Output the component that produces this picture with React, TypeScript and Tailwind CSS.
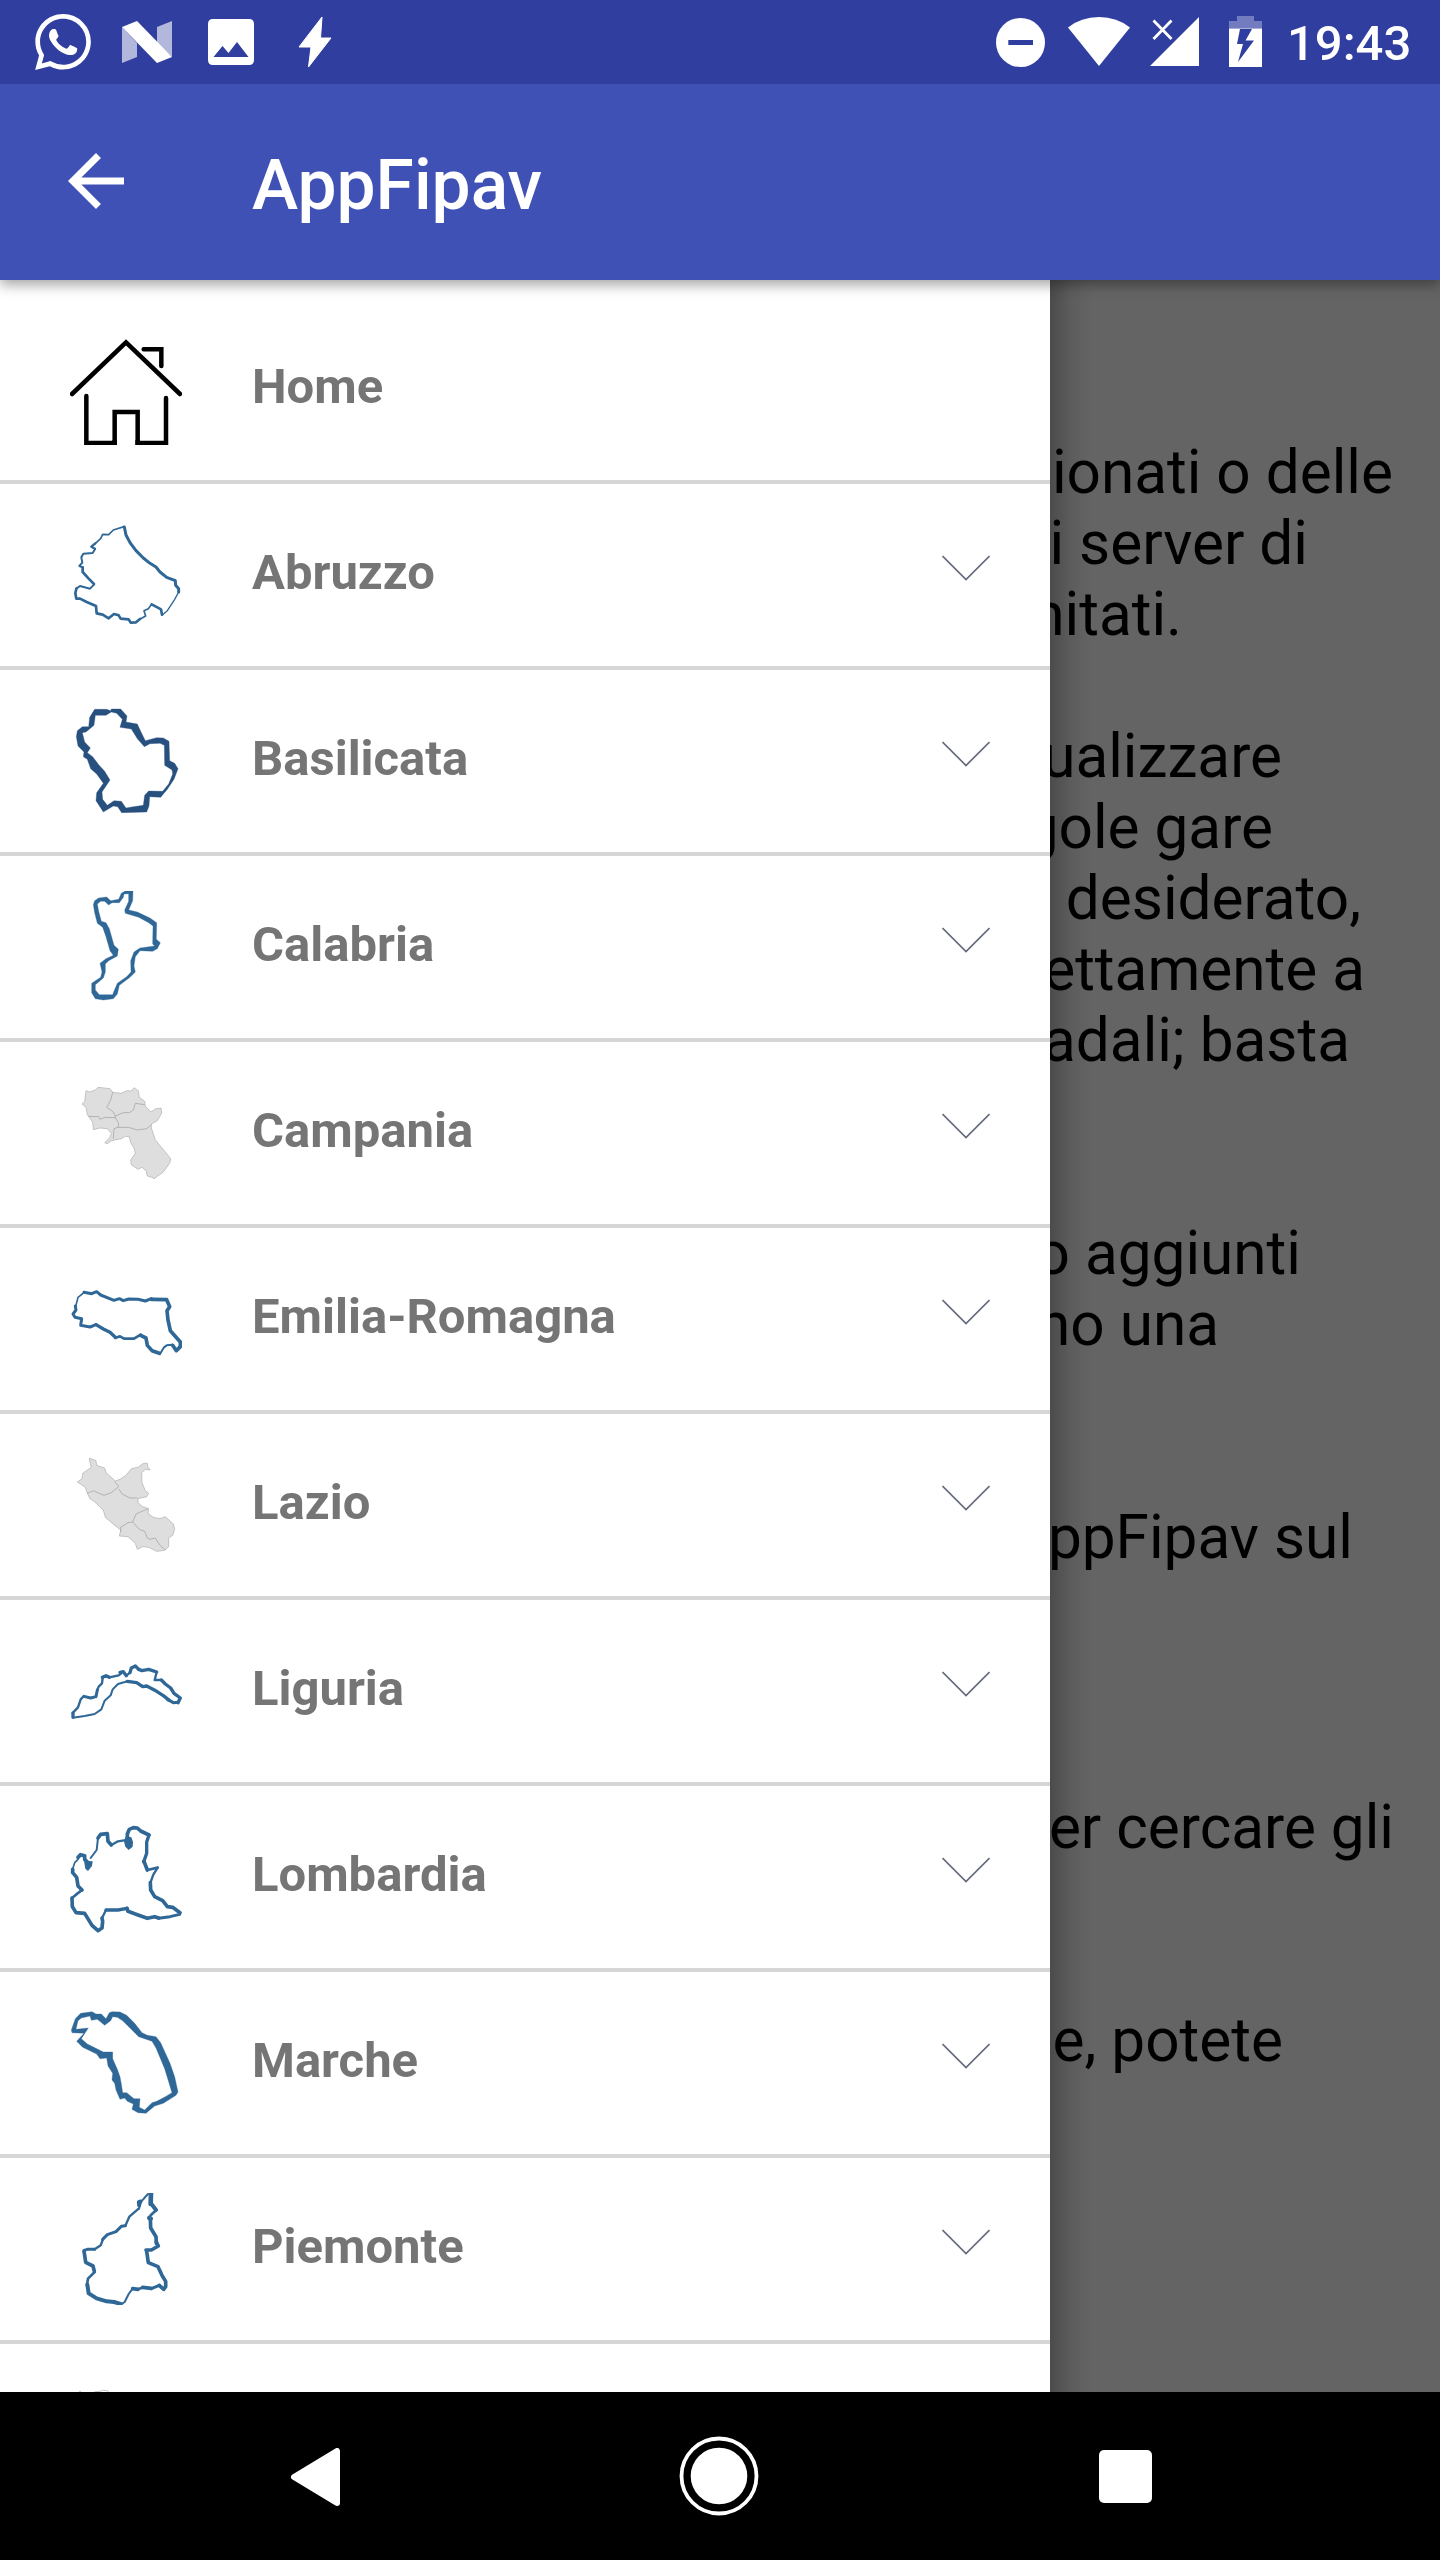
import type { ReactNode } from "react";
import { SiWhatsapp } from "react-icons/si";

const BLUE = "#2f6797";
const NAVY = "#27507f";

type Stroke = [width: number, d: string];

function Outline({ strokes }: { strokes: Stroke[] }) {
  return (
    <g fill="none" stroke={BLUE} strokeLinecap="round" strokeLinejoin="round">
      {strokes.map(([w, d]) => (
        <path key={d} d={d} strokeWidth={w + 2} />
      ))}
    </g>
  );
}

function Provinces({ area, borders }: { area: string; borders: string }) {
  return (
    <g stroke="#a6a6a6" strokeWidth={1.8} strokeLinejoin="round">
      <path d={area} fill="#dedede" />
      <path d={borders} fill="none" stroke="#959595" />
    </g>
  );
}

type Entry = { name: string; top: number; art: ReactNode; plain?: boolean };

const entries: Entry[] = [
  {
    name: "Home",
    top: 39,
    plain: true,
    art: (
      <g fill="none" stroke="#000" strokeWidth={13.5}>
        <path d="M66 222 228 67 390 222" strokeLinecap="round" />
        <path d="M281 88H334V138M109 228V369H194V276H263V369H348V234" strokeLinecap="round" />
        <path d="M194 360V375M263 360V375" />
      </g>
    ),
  },
  {
    name: "Abruzzo",
    top: 597,
    art: (
      <Outline
        strokes={[
          [7, "M223 621 228 645 240 668 258 692 280 714 300 730 318 741 330 756 350 772 376 782 377 796 386 806 386 816"],
          [2, "M386 816 374 838 360 860 352 872 336 886"],
          [6, "M336 884 333 868 322 862 305 853"],
          [3, "M305 853 295 866 282 872 287 888 272 896"],
          [6, "M270 897 258 907 242 908 236 898 212 896 206 886 192 882 176 895 158 884 140 880 138 858 110 846 90 836 79 836 76 820 79 806"],
          [4, "M79 806 90 798 120 806 132 794"],
          [6, "M132 792 116 776 98 756 98 742"],
          [4, "M98 742 88 738 97 728 94 712 100 701 128 699 135 688"],
          [5, "M135 686 124 680 136 670"],
          [3, "M136 670 152 656 158 643 176 644 190 630 222 620"],
        ]}
      />
    ),
  },
  {
    name: "Basilicata",
    top: 45,
    art: (
      <path
        fill={NAVY}
        stroke={NAVY}
        strokeWidth={1}
        fillRule="evenodd"
        d="M134 58 170 58 182 62 184 57 212 57 231 78 228 96 262 102 272 124 286 152 320 143 340 144 357 154 359 212 374 220 384 236 372 268 352 298 332 322 299 320 297 348 290 366 215 368 203 350 190 348 160 366 138 332 140 308 160 280 140 252 122 236 112 208 100 200 102 186 84 168 79 140 82 122 97 110 116 110 119 82ZM136 76 168 76 184 66 200 70 217 88 210 112 244 117 262 146 283 170 300 161 330 160 343 166 344 226 366 240 368 252 356 282 338 304 296 303 284 316 280 346 250 350 228 354 214 334 192 332 172 346 158 328 156 306 180 270 164 244 146 224 128 200 112 188 121 174 104 156 97 128 108 126 132 106Z"
      />
    ),
  },
  {
    name: "Calabria",
    top: 603,
    art: (
      <path
        fill={BLUE}
        stroke={BLUE}
        strokeWidth={1}
        fillRule="evenodd"
        d="M134 632 146 624 170 621 182 632 206 628 214 610 226 603 249 603 248 632 236 660 262 666 300 684 320 698 319 748 331 758 322 776 308 784 270 782 256 800 252 828 256 846 240 862 208 886 202 912 190 926 160 930 136 926 125 908 125 880 152 862 156 846 150 820 168 806 190 796 180 782 168 740 158 712 142 700 134 668 130 644ZM142 642 152 634 164 634 176 645 186 638 208 638 220 622 222 612 236 611 236 634 224 660 226 670 266 682 296 698 309 708 308 762 314 768 270 774 252 786 242 812 243 846 230 860 202 880 190 908 188 914 148 914 136 900 136 884 160 864 166 846 166 822 176 812 202 798 205 778 192 766 178 716 168 698 154 694 146 664Z"
      />
    ),
  },
  {
    name: "Campania",
    top: 51,
    art: (
      <Provinces
        area="M108 92 118 96 136 90 144 82 180 86 188 97 214 100 230 92 244 93 252 83 265 92 268 112 284 124 286 138 302 156 318 146 333 144 335 160 322 182 304 192 304 204 316 240 346 276 362 296 360 308 340 336 312 356 306 352 292 348 288 332 276 322 264 328 244 314 242 300 256 280 252 264 242 248 238 230 226 229 214 236 184 242 172 251 164 248 180 232 184 220 172 206 150 204 130 209 128 186 112 164 108 142 96 132 104 124Z"
        borders="M188 97 182 120 170 142 190 156 196 168 220 158 238 158 250 150 256 130 284 134M116 169 146 170 150 178 164 172 196 173 206 190 204 202 192 206 190 236M204 202 236 202 262 210 290 206 304 194M196 168 196 173"
      />
    ),
  },
  {
    name: "Emilia-Romagna",
    top: 609,
    art: (
      <Outline
        strokes={[
          [7, "M102 697 125 701 140 695 152 705 192 721 208 716 220 722 236 717 264 718 286 723 304 716"],
          [9, "M304 718 350 719 359 740 351 752 354 780 361 812 391 846 391 860 379 872 368 856"],
          [4, "M368 854 350 856 342 862 330 882"],
          [9, "M328 880 306 872 292 856 288 834 272 826"],
          [6, "M272 824 252 836 222 836 210 829 196 834"],
          [8, "M196 832 180 817 160 807 138 794"],
          [7, "M138 794 120 801 92 796 95 776 75 772 69 762 78 750 76 738"],
          [3, "M77 740 84 712 102 698"],
        ]}
      />
    ),
  },
  {
    name: "Lazio",
    top: 57,
    art: (
      <Provinces
        area="M118 84 138 92 140 106 164 114 168 128 196 153 210 148 228 136 244 116 264 112 280 100 292 100 294 112 301 120 286 118 275 128 276 158 286 182 296 190 290 200 264 206 264 218 278 230 296 236 294 250 310 262 330 266 346 260 370 282 374 298 368 316 356 324 356 350 344 361 320 364 296 352 278 350 262 358 256 340 234 320 208 318 212 300 192 284 166 262 160 240 132 214 120 206 112 190 106 172 82 156 96 146 98 130 124 112 120 98Z"
        borders="M112 190 130 182 148 190 162 196 184 188 206 170 194 154M206 176 216 192 240 204 262 204M294 236 258 252 248 276 234 278 212 292 212 306M248 276 268 298 284 304 292 324 300 328 316 324 330 346 346 360"
      />
    ),
  },
  {
    name: "Liguria",
    top: 615,
    art: (
      <Outline
        strokes={[
          [8, "M69 861 69 849"],
          [5, "M68 849 84 832 92 808 100 800"],
          [7, "M102 799 122 804 138 800 142 780"],
          [5, "M142 780 146 770 156 760 158 744"],
          [8, "M157 742 168 737 178 742"],
          [5, "M178 742 206 736 214 730"],
          [8, "M210 727 220 725 229 737M240 728 244 714 256 708 266 718"],
          [5, "M229 737 240 728"],
          [8, "M266 718 276 722 296 718 320 726"],
          [5, "M320 726 314 750 334 750"],
          [8, "M334 750 346 762 362 774 372 790 391 804 384 818"],
          [7, "M384 817 370 818 352 808"],
          [8, "M358 811 340 797 320 784 290 768 278 770 260 758 232 754"],
          [4, "M232 754 204 762 188 778 182 796 164 812 154 838 134 852 104 858 68 863"],
        ]}
      />
    ),
  },
  {
    name: "Lombardia",
    top: 63,
    art: (
      <>
        <Outline
          strokes={[
            [9, "M232 116 232 102 238 88 250 83 262 84 272 93 297 105"],
            [8, "M297 105 290 126 290 160 281 186"],
            [9, "M282 184 292 210"],
            [6, "M292 210 323 203"],
            [5, "M323 203 310 224 302 246"],
            [9, "M301 248 302 270 314 290 338 302 352 320 368 322 390 338"],
            [7, "M389 343 360 350 326 355"],
            [9, "M326 354 314 350 292 355 262 344 234 334 231 325"],
            [8, "M231 325 204 330 168 330"],
            [5, "M168 330 158 350"],
            [9, "M156 354 158 364 156 384 144 392 126 376 104 340 78 338 67 320 66 294"],
            [6, "M66 294 78 284 96 270"],
            [9, "M96 270 84 258 80 232 68 218 68 208"],
            [3, "M67 210 74 188 84 178"],
            [9, "M84 172 92 164 104 167 104 178 116 190"],
            [4, "M122 174 140 150 144 114"],
            [9, "M144 114 152 103 172 101 174 124 184 135"],
            [5, "M184 135 204 124 236 119"],
          ]}
        />
        <path fill={BLUE} d="M102 182 128 184 126 198 114 213 106 206ZM228 108 244 112 249 126 248 140 236 150 226 140 222 124Z" />
      </>
    ),
  },
  {
    name: "Marche",
    top: 621,
    art: (
      <path
        fill={BLUE}
        stroke={BLUE}
        strokeWidth={1}
        fillRule="evenodd"
        d="M92 640 126 635 138 642 154 642 168 656 178 638 186 635 210 636 230 646 254 670 276 698 292 706 318 710 332 728 360 790 374 830 384 876 378 886 340 910 314 918 288 940 264 938 246 928 250 912 232 904 224 894 210 898 198 870 194 850 186 840 188 820 174 798 170 774 150 776 140 762 98 742 80 724 102 700 66 698 64 690 76 656ZM94 654 120 648 124 661 142 658 164 676 182 662 188 650 202 652 218 662 266 710 306 724 318 744 344 806 366 878 346 890 320 904 306 908 284 930 268 922 270 896 252 896 230 878 218 878 214 852 210 830 202 808 188 776 188 756 160 756 112 732 94 716 115 684 78 688 84 662Z"
      />
    ),
  },
  {
    name: "Piemonte",
    top: 99,
    art: (
      <Outline
        strokes={[
          [12, "M303 97 302 132"],
          [10, "M303 130 318 150"],
          [6, "M319 150 302 166"],
          [12, "M298 174 302 176"],
          [9, "M301 176 302 204 318 230 319 250"],
          [9, "M319 246 325 258 304 270 288 270"],
          [9, "M290 274 295 308 324 320 336 346 347 364 347 380 341 388 328 376"],
          [7, "M328 376 304 386"],
          [9, "M304 385 278 382M264 388 248 386"],
          [6, "M278 383 264 387"],
          [4, "M248 386 236 402 224 426 212 434"],
          [10, "M212 432 192 426 170 424 140 415 116 400 112 374"],
          [6, "M111 374 114 356 134 336"],
          [9, "M133 334 129 318 107 307 104 286 102 274"],
          [7, "M102 271 112 268 134 268"],
          [5, "M134 268 152 256 158 240"],
          [7, "M158 238 172 224 198 215 214 199 226 197"],
          [5, "M226 197 238 170 266 146"],
          [9, "M267 136 266 126 272 124"],
          [4, "M267 146 274 124 294 102"],
        ]}
      />
    ),
  },
];

const paragraphs: { text: string; cls: string }[] = [
  { text: "ionati o delle", cls: "mr-[47px]" },
  { text: "i server di", cls: "mr-[132px]" },
  { text: "mitati.", cls: "mr-[258px]" },
  { text: "ualizzare", cls: "mt-[71px] mr-[158px]" },
  { text: "gole gare", cls: "mr-[167px]" },
  { text: "desiderato,", cls: "mr-[79px]" },
  { text: "ettamente a", cls: "mr-[75px]" },
  { text: "adali; basta", cls: "mr-[90px]" },
  { text: "o aggiunti", cls: "mt-[142px] mr-[139px]" },
  { text: "no una", cls: "mr-[221px]" },
  { text: "ppFipav sul", cls: "mt-[142px] mr-[87px]" },
  { text: "er cercare gli", cls: "mt-[219px] mr-[46px]" },
  { text: "e, potete", cls: "mt-[142px] mr-[157px]" },
];

function StatusBar() {
  return (
    <div className="flex h-[84px] items-start bg-[#303f9f] text-white">
      <SiWhatsapp className="mt-[14px] ml-[35px] size-14" />
      <svg className="mt-[21px] ml-[31px] h-[42px] w-[50px]" viewBox="0 0 50 42">
        <path d="M0 6 15 22V36L0 42ZM35 6 50 0V36L35 22Z" fill="#fff" opacity=".63" />
        <path d="M0 6 15 0 50 36 35 42Z" fill="#fff" />
      </svg>
      <svg className="mt-[19px] ml-9 h-[46px] w-[46px]" viewBox="0 0 46 46">
        <path
          fillRule="evenodd"
          fill="#fff"
          d="M5 0H41Q46 0 46 5V41Q46 46 41 46H5Q0 46 0 41V5Q0 0 5 0ZM5.500 38H40.500L29 23 20.500 34 14.500 27Z"
        />
      </svg>
      <svg className="mt-4 ml-11 h-[52px] w-[34px]" viewBox="0 0 34 52">
        <path
          d="M24 1 22.500 22 33 22 10.500 51 13 31 1 31Z"
          fill="#fff"
          stroke="#fff"
          strokeLinejoin="round"
        />
      </svg>
      <svg className="mt-[18px] ml-[664px] size-[49px]" viewBox="0 0 49 49">
        <circle cx="24.5" cy="24.5" r="24.5" fill="#fff" />
        <path d="M12.300 22H37V27H12.300Z" fill="#303f9f" />
      </svg>
      <svg className="mt-[17px] ml-[23px] h-[49px] w-[62px]" viewBox="0 0 62 49">
        <path d="M31 49 0 10.500Q13 0 31 0T62 10.500Z" fill="#fff" />
      </svg>
      <svg className="mt-[17px] ml-5 h-[49px] w-[49px]" viewBox="0 0 49 49">
        <path d="M0 49 49 0V49Z" fill="#fff" />
        <path d="M3.500 3.500 21.500 22M21.500 3.500 3.500 22" stroke="#fff" strokeWidth="2.800" />
      </svg>
      <svg className="mt-4 ml-[30px] h-[51px] w-[33px]" viewBox="0 0 33 51">
        <path d="M8 0H25V5H33V12.500H0V5H8Z" fill="#fff" opacity=".32" />
        <path fillRule="evenodd" d="M0 12.500H33V51H0ZM11 13 8 28H14L9 46 25 24.500H16.500L23 13Z" fill="#fff" />
      </svg>
      <span className="mt-[15px] ml-[25px] text-[49px] leading-[58px] font-medium">19:43</span>
    </div>
  );
}

export default function App() {
  return (
    <div className="flex h-[2560px] w-[1440px] flex-col overflow-hidden bg-black font-['Roboto',sans-serif]">
      <header className="relative z-20 shadow-[0_5px_12px_rgba(0,0,0,0.35)]">
        <StatusBar />
        <div className="flex h-[196px] items-center bg-[#3f51b5] text-white">
          <svg className="-mt-[2px] ml-[54px] size-[84px]" viewBox="0 0 24 24" fill="currentColor">
            <path d="M20 11H7.830l5.590-5.590L12 4l-8 8 8 8 1.410-1.410L7.830 13H20v-2z" />
          </svg>
          <h1 className="mt-2 ml-[114px] text-[69.5px] leading-[82px] font-medium">AppFipav</h1>
        </div>
      </header>

      <div className="flex min-h-0 flex-1">
        <nav className="relative z-10 w-[1050px] shrink-0 overflow-hidden bg-white pt-[18px]">
          {entries.map((e) => (
            <div
              key={e.name}
              className="flex h-[186px] items-center border-b-4 border-[#d6d6d6] pr-[60px] pl-[70px]"
            >
              <svg className="size-28" viewBox={`60 ${e.top} 336 336`}>
                {e.art}
              </svg>
              <span className="-mt-1 ml-[70px] flex-1 text-[49px] leading-[58px] font-bold text-[#757575]">
                {e.name}
              </span>
              {!e.plain && (
                <svg className="-mt-[14px] h-[26px] w-12" viewBox="0 0 48 26">
                  <path d="M.5 1 24 24.500 47.500 1" fill="none" stroke="#666b7d" strokeWidth="1.700" />
                </svg>
              )}
            </div>
          ))}
          <svg className="mt-[35px] ml-[70px] size-28" viewBox="60 657 336 336">
            <path d="M86 696 90 693 94 696M132 696 150 694 158 691 172 692 178 697" fill="none" stroke="#a6a6a6" strokeWidth="2" />
          </svg>
        </nav>

        <main className="relative w-[390px] overflow-hidden bg-[#646464] pt-[157px] text-[60.3px] leading-[71px] text-black">
          <div className="absolute inset-y-0 left-0 w-[42px] bg-gradient-to-r from-black/25 via-black/8 to-transparent" />
          {paragraphs.map((p) => (
            <p key={p.text} className={`flex justify-end whitespace-nowrap ${p.cls}`}>
              {p.text}
            </p>
          ))}
        </main>
      </div>

      <footer className="flex h-[168px] items-start bg-black">
        <svg className="mt-14 ml-[291px] h-[58px] w-[50px]" viewBox="0 0 50 58">
          <path d="M3 29 46 3V55Z" fill="#fff" stroke="#fff" strokeWidth="6" strokeLinejoin="round" />
        </svg>
        <svg className="mt-11 ml-[338px] size-20" viewBox="0 0 80 80">
          <circle cx="40" cy="40" r="37.5" fill="none" stroke="#fff" strokeWidth="3.800" />
          <circle cx="40" cy="40" r="28.3" fill="#fff" />
        </svg>
        <div className="mt-[58px] ml-[340px] h-[53px] w-[53px] rounded-[5px] bg-white" />
      </footer>
    </div>
  );
}
